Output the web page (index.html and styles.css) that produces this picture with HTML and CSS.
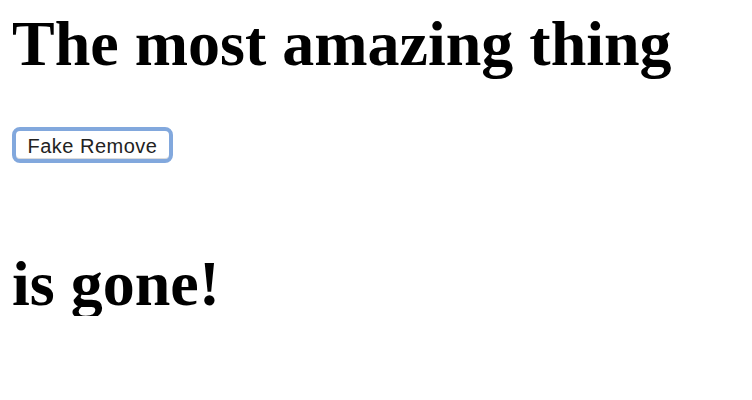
FILE: index.html
```html
<!DOCTYPE html>
<html>
<head>
<meta charset="utf-8">
<link rel="stylesheet" href="styles.css">
</head>
<body>
<h1 class="title">The most amazing thing</h1>
<div class="actions">
  <button class="fake-btn">Fake Remove</button>
</div>
<h1 class="title gone">is gone!</h1>
</body>
</html>
```
FILE: styles.css
```css
html, body {
  background: #ffffff;
}
body {
  margin: 12px;
  font-family: "Liberation Serif", "Times New Roman", serif;
  color: #000;
}
.title {
  margin: 0;
  font-size: 64px;
  line-height: 64px;
  font-weight: bold;
}
.actions {
  margin-top: 51px;
  display: flex;
}
.fake-btn {
  box-sizing: border-box;
  width: 161px;
  height: 36px;
  padding: 2px 0 0 0;
  border: 4px solid #82a8dd;
  border-radius: 8px;
  background: #ffffff;
  color: #222222;
  font-family: "Liberation Sans", Arial, sans-serif;
  font-size: 20px;
  letter-spacing: 0.5px;
  line-height: 26px;
  display: flex;
  align-items: center;
  justify-content: center;
  box-shadow: inset 0 -1px 0 #dcdcdc;
}
.gone {
  margin-top: 89px;
}
```
